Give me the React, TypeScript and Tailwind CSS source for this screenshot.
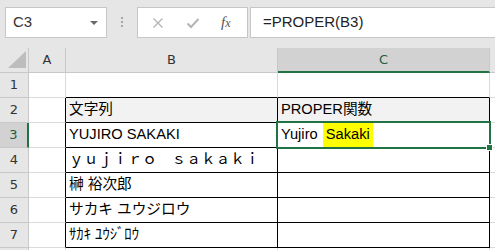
import React from "react";

const CELL_FONT = "font-['Liberation_Sans','Noto_Sans_CJK_JP',sans-serif]";

type Row = { n: number; b: string; c: React.ReactNode };

const rows: Row[] = [
  { n: 1, b: "", c: "" },
  { n: 2, b: "文字列", c: <span className="pt-[3px]">PROPER関数</span> },
  {
    n: 3,
    b: "YUJIRO SAKAKI",
    c: (
      <>
        <span className="pt-[3px]">Yujiro </span>
        <span className="ml-[1px] bg-[#ffff00] px-[3px] pt-[3px]">Sakaki</span>
      </>
    ),
  },
  { n: 4, b: "ｙｕｊｉｒｏ　ｓａｋａｋｉ", c: "" },
  { n: 5, b: "榊 裕次郎", c: "" },
  { n: 6, b: "サカキ ユウジロウ", c: "" },
  { n: 7, b: "ｻｶｷ ﾕｳｼﾞﾛｳ", c: "" },
];

function CloseIcon() {
  return (
    <svg viewBox="0 0 12 12" className="h-[12px] w-[12px]" fill="none" stroke="#b4b4b4" strokeWidth="1.3">
      <path d="M1.5 1.5 10.5 10.5M10.5 1.5 1.5 10.5" />
    </svg>
  );
}

function CheckIcon() {
  return (
    <svg viewBox="0 0 14 12" className="h-[12px] w-[14px]" fill="none" stroke="#b4b4b4" strokeWidth="2">
      <path d="M1.5 6.5 5 10 12.5 2" />
    </svg>
  );
}

function CornerTriangle() {
  return (
    <svg viewBox="0 0 18 17" className="h-[17px] w-[18px]">
      <path d="M18 0V17H0Z" fill="#bdbdbd" />
    </svg>
  );
}

function FormulaBar() {
  return (
    <div className="flex h-[48px] items-start bg-[#e6e6e6] pl-[5px] pt-[7px]">
      <div className="flex h-[31px] w-[102px] items-center justify-between border border-[#c6c6c6] bg-white pl-[7px] pr-[8px]">
        <span className="font-['Liberation_Sans',sans-serif] text-[15px] text-[#333]">C3</span>
        <span className="h-0 w-0 border-x-[4px] border-t-[4px] border-x-transparent border-t-[#6a6a6a]" />
      </div>
      <div className="flex w-[30px] flex-col items-center gap-[2px] pt-[10px]">
        <span className="h-[2px] w-[2px] bg-[#a6a6a6]" />
        <span className="h-[2px] w-[2px] bg-[#a6a6a6]" />
        <span className="h-[2px] w-[2px] bg-[#a6a6a6]" />
      </div>
      <div className="flex h-[31px] w-[111px] items-center border border-[#c6c6c6] bg-white pl-[14px]">
        <CloseIcon />
        <span className="ml-[22px]">
          <CheckIcon />
        </span>
        <span className="ml-[21px] font-['Liberation_Serif',serif] text-[15px] italic text-[#555]">
          f<span className="text-[12px]">x</span>
        </span>
      </div>
      <div className="ml-[2px] mr-[-2px] flex h-[31px] flex-1 items-center border border-[#c6c6c6] bg-white pl-[12px]">
        <span className="font-['Liberation_Sans',sans-serif] text-[15px] text-[#222]">=PROPER(B3)</span>
      </div>
    </div>
  );
}

export default function App() {
  return (
    <div className="h-[250px] w-[495px] overflow-hidden bg-white">
      <FormulaBar />
      <div className="relative grid grid-cols-[29px_37px_212px_212px_1fr] grid-rows-[25px_repeat(8,25px)]">
        {/* header row */}
        <div className="flex items-end justify-end border-b border-r border-[#c8c8c8] bg-[#e6e6e6] pb-[4px] pr-[2px]">
          <CornerTriangle />
        </div>
        <div className="flex items-center justify-center border-b border-r border-[#c8c8c8] bg-[#e6e6e6] font-['DejaVu_Sans',sans-serif] text-[13px] text-[#333]">
          A
        </div>
        <div className="flex items-center justify-center border-b border-r border-[#c8c8c8] bg-[#e6e6e6] font-['DejaVu_Sans',sans-serif] text-[13px] text-[#333]">
          B
        </div>
        <div className="flex items-center justify-center border-b-2 border-r border-b-[#217346] border-r-[#c8c8c8] bg-[#d2d2d2] font-['DejaVu_Sans',sans-serif] text-[13px] text-[#1f5d3e]">
          C
        </div>
        <div className="border-b border-[#c8c8c8] bg-[#e6e6e6]" />

        {rows.map((r) => {
          const selected = r.n === 3;
          const inTable = r.n >= 2;
          const fill = r.n === 2 ? "bg-[#f2f2f2]" : "bg-white";
          return (
            <React.Fragment key={r.n}>
              <div
                className={
                  selected
                    ? "flex items-center justify-center border-b border-r-2 border-b-[#c8c8c8] border-r-[#217346] bg-[#d2d2d2] font-['DejaVu_Sans',sans-serif] text-[13px] text-[#1f5d3e]"
                    : "flex items-center justify-center border-b border-r border-[#c8c8c8] bg-[#e6e6e6] font-['DejaVu_Sans',sans-serif] text-[13px] text-[#333]"
                }
              >
                {r.n}
              </div>
              <div
                className={
                  inTable
                    ? "border-b border-r border-b-[#dadada] border-r-black"
                    : "border-b border-r border-[#dadada]"
                }
              />
              <div
                className={`overflow-hidden whitespace-pre px-[3px] pt-[3px] text-[14.67px] leading-[17px] text-black ${CELL_FONT} border-b border-r border-black ${
                  inTable ? fill : "border-r-[#dadada]"
                }`}
              >
                {r.b}
              </div>
              <div
                className={`flex items-stretch overflow-hidden whitespace-pre px-[3px] text-[14.67px] leading-[17px] text-black ${CELL_FONT} border-b border-r border-black ${
                  inTable ? fill : "border-r-[#dadada]"
                }`}
              >
                {r.c}
              </div>
              <div className="border-b border-[#dadada]" />
            </React.Fragment>
          );
        })}

        {/* row 8, partly visible */}
        <div className="border-r border-[#c8c8c8] bg-[#e6e6e6]" />
        <div className="border-r border-[#dadada]" />
        <div className="border-r border-[#dadada]" />
        <div className="border-r border-[#dadada]" />
        <div />

        {/* active cell C3 */}
        <div className="absolute left-[276px] top-[73px] h-[28px] w-[215px] border-2 border-[#217346]" />
        <div className="absolute left-[486px] top-[96px] h-[7px] w-[7px] border border-white bg-[#217346]" />
      </div>
    </div>
  );
}
